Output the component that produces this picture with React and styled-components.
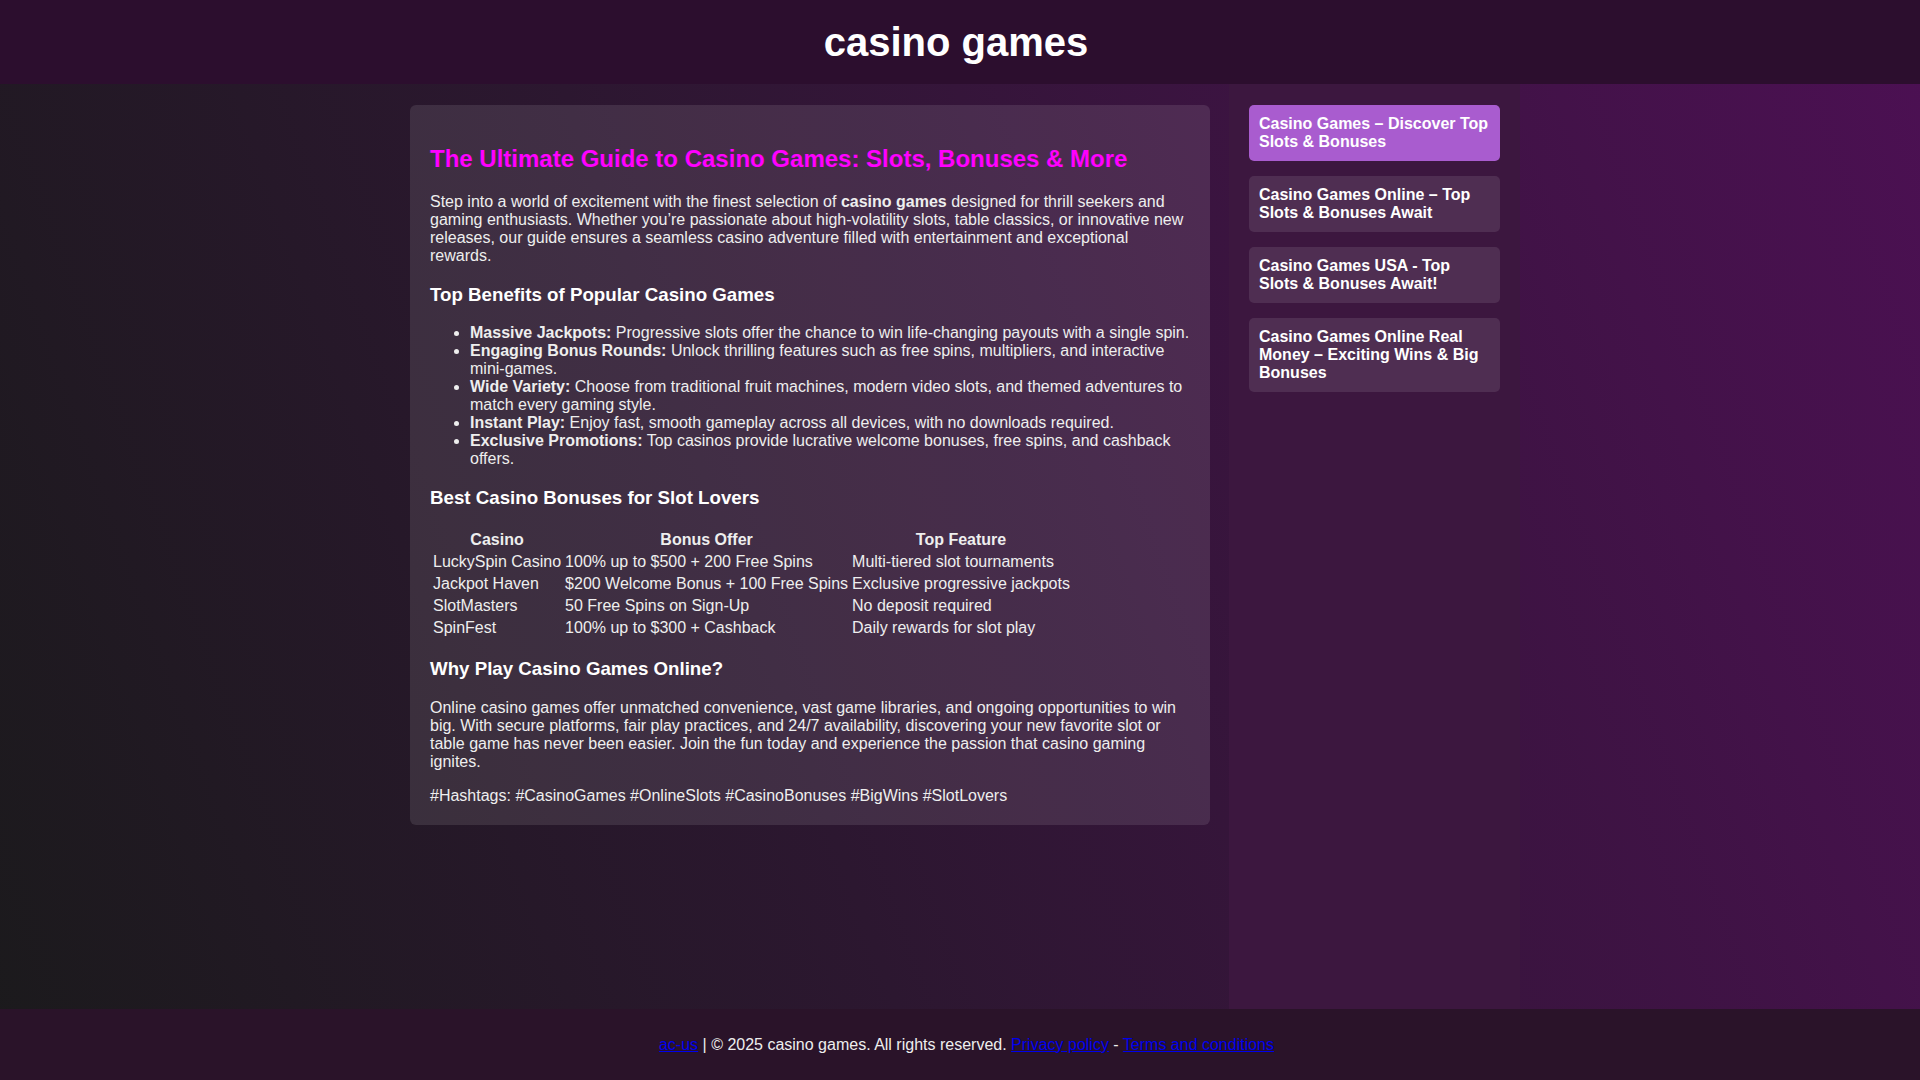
import React from "react";
import styled, { createGlobalStyle } from "styled-components";

const GlobalStyle = createGlobalStyle`
  body {
    margin: 0;
    font-family: "Liberation Sans", Arial, sans-serif;
    font-size: 16px;
    color: #eee;
    background: linear-gradient(70deg, #1b1a1c 0%, #2c1730 40%, #4c1053 100%);
  }
`;

const sideLinks = [
  { title: "Casino Games – Discover Top Slots & Bonuses", active: true },
  { title: "Casino Games Online – Top Slots & Bonuses Await" },
  { title: "Casino Games USA - Top Slots & Bonuses Await!" },
  { title: "Casino Games Online Real Money – Exciting Wins & Big Bonuses" },
];

const benefits = [
  {
    label: "Massive Jackpots:",
    text: "Progressive slots offer the chance to win life-changing payouts with a single spin.",
  },
  {
    label: "Engaging Bonus Rounds:",
    text: "Unlock thrilling features such as free spins, multipliers, and interactive mini-games.",
  },
  {
    label: "Wide Variety:",
    text: "Choose from traditional fruit machines, modern video slots, and themed adventures to match every gaming style.",
  },
  {
    label: "Instant Play:",
    text: "Enjoy fast, smooth gameplay across all devices, with no downloads required.",
  },
  {
    label: "Exclusive Promotions:",
    text: "Top casinos provide lucrative welcome bonuses, free spins, and cashback offers.",
  },
];

const bonuses = [
  ["LuckySpin Casino", "100% up to $500 + 200 Free Spins", "Multi-tiered slot tournaments"],
  ["Jackpot Haven", "$200 Welcome Bonus + 100 Free Spins", "Exclusive progressive jackpots"],
  ["SlotMasters", "50 Free Spins on Sign-Up", "No deposit required"],
  ["SpinFest", "100% up to $300 + Cashback", "Daily rewards for slot play"],
];

const App = () => {
  return (
    <>
      <GlobalStyle />
      <Header>
        <SiteTitle>casino games</SiteTitle>
      </Header>
      <Layout>
        <Article>
          <ArticleTitle>
            The Ultimate Guide to Casino Games: Slots, Bonuses &amp; More
          </ArticleTitle>
          <Paragraph>
            Step into a world of excitement with the finest selection of{" "}
            <strong>casino games</strong> designed for thrill seekers and gaming
            enthusiasts. Whether you’re passionate about high-volatility slots,
            table classics, or innovative new releases, our guide ensures a
            seamless casino adventure filled with entertainment and exceptional
            rewards.
          </Paragraph>
          <SectionTitle>Top Benefits of Popular Casino Games</SectionTitle>
          <List>
            {benefits.map((item) => (
              <li key={item.label}>
                <strong>{item.label}</strong> {item.text}
              </li>
            ))}
          </List>
          <SectionTitle>Best Casino Bonuses for Slot Lovers</SectionTitle>
          <Table>
            <thead>
              <tr>
                <th>Casino</th>
                <th>Bonus Offer</th>
                <th>Top Feature</th>
              </tr>
            </thead>
            <tbody>
              {bonuses.map((row) => (
                <tr key={row[0]}>
                  {row.map((cell) => (
                    <td key={cell}>{cell}</td>
                  ))}
                </tr>
              ))}
            </tbody>
          </Table>
          <SectionTitle>Why Play Casino Games Online?</SectionTitle>
          <Paragraph>
            Online casino games offer unmatched convenience, vast game libraries,
            and ongoing opportunities to win big. With secure platforms, fair
            play practices, and 24/7 availability, discovering your new favorite
            slot or table game has never been easier. Join the fun today and
            experience the passion that casino gaming ignites.
          </Paragraph>
          <Paragraph>
            #Hashtags: #CasinoGames #OnlineSlots #CasinoBonuses #BigWins
            #SlotLovers
          </Paragraph>
        </Article>
        <Sidebar>
          {sideLinks.map((link) => (
            <SideLink key={link.title} href="#" $active={link.active}>
              {link.title}
            </SideLink>
          ))}
        </Sidebar>
      </Layout>
      <Footer>
        <FooterLink href="#">ac-us</FooterLink> | © 2025 casino games. All
        rights reserved. <FooterLink href="#">Privacy policy</FooterLink> -{" "}
        <FooterLink href="#">Terms and conditions</FooterLink>
      </Footer>
    </>
  );
};

const Header = styled.header`
  background-color: #2c0e2e;
  padding: 20px 8px 19px 0;
  text-align: center;
`;

const SiteTitle = styled.h1`
  margin: 0;
  color: #fff;
  font-size: 40px;
  font-weight: bold;
`;

const Layout = styled.div`
  display: flex;
  justify-content: center;
  gap: 19px;
  padding-left: 10px;
  min-height: calc(100vh - 155px);
`;

const Article = styled.main`
  align-self: flex-start;
  width: 800px;
  box-sizing: border-box;
  margin-top: 21px;
  padding: 20px;
  background-color: rgba(255, 255, 255, 0.1);
  border-radius: 6px;
`;

const ArticleTitle = styled.h2`
  margin: 0.83em 0;
  color: #ff00ff;
  font-size: 24px;
`;

const Paragraph = styled.p`
  margin: 16px 0;

  &:last-child {
    margin-bottom: 0;
  }
`;

const SectionTitle = styled.h3`
  margin: 18.72px 0;
  color: #fff;
  font-size: 18.72px;
`;

const List = styled.ul`
  margin: 16px 0;
  padding-left: 40px;
`;

const Table = styled.table`
  border-spacing: 2px;

  th,
  td {
    padding: 1px;
  }
`;

const Sidebar = styled.aside`
  width: 251px;
  padding: 21px 20px 20px;
  background-color: #3c173f;
  display: flex;
  flex-direction: column;
  gap: 15px;
`;

const SideLink = styled.a`
  display: block;
  padding: 10px;
  border-radius: 5px;
  color: #fff;
  font-weight: bold;
  text-decoration: none;
  background-color: ${(p) => (p.$active ? "#a95ccf" : "rgba(255, 255, 255, 0.1)")};
`;

const Footer = styled.footer`
  background-color: #2a1329;
  padding: 27px 0 30px 13px;
  text-align: center;
  color: #eee;
`;

const FooterLink = styled.a`
  color: #0000ee;
`;

export default App;
